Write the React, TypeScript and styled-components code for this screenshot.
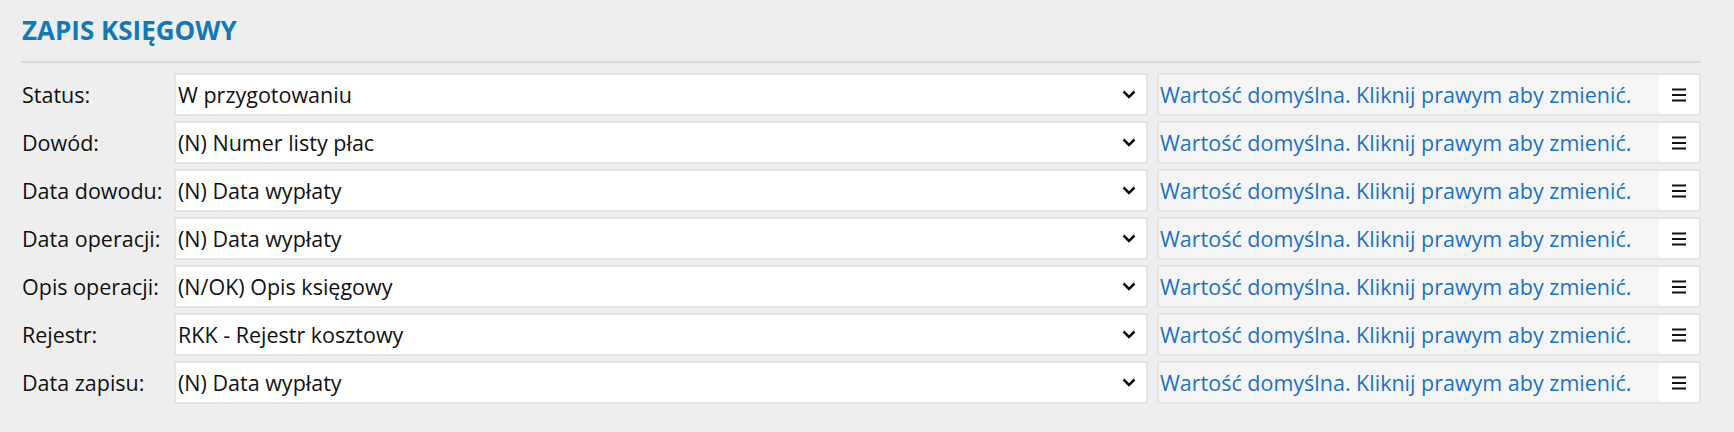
import React from "react";
import styled, { createGlobalStyle } from "styled-components";

const Global = createGlobalStyle`
  html, body { margin: 0; padding: 0; background: #eeeeee; }
  body { font-family: "Segoe UI", "Open Sans", "Noto Sans", sans-serif; }
`;

const Panel = styled.div`
  padding: 13px 33px 0 21px;
  width: 1734px;
  height: 432px;
  box-sizing: border-box;
  background: #eeeeee;
`;

const Title = styled.h2`
  margin: 0;
  padding-left: 1px;
  font-size: 26px;
  font-weight: 700;
  color: #1478b4;
  line-height: 34px;
`;

const Separator = styled.div`
  height: 2px;
  background: #d9d9d9;
  margin-top: 14px;
  margin-bottom: 10px;
`;

const Rows = styled.div`
  display: flex;
  flex-direction: column;
  gap: 5px;
`;

const Row = styled.div`
  display: grid;
  grid-template-columns: 153px 974px 1fr;
  height: 43px;
  align-items: stretch;
`;

const Label = styled.div`
  display: flex;
  align-items: center;
  padding-left: 1px;
  font-size: 21.5px;
  color: #111;
  white-space: nowrap;
`;

const Select = styled.div`
  display: flex;
  align-items: center;
  justify-content: space-between;
  background: #ffffff;
  border: 2px solid #e4e4e4;
  padding: 0 10px 0 2px;
  font-size: 21.5px;
  color: #111;
  box-sizing: border-box;
  white-space: nowrap;
`;

const DefaultBox = styled.div`
  display: flex;
  margin-left: 9px;
  border: 2px solid #e4e4e4;
  background: #ffffff;
  box-sizing: border-box;
`;

const DefaultText = styled.div`
  flex: 1;
  display: flex;
  align-items: center;
  background: #f5f5f5;
  padding-left: 1px;
  font-size: 21.5px;
  color: #1b72c4;
  white-space: nowrap;
`;

const MenuButton = styled.div`
  width: 40px;
  display: flex;
  align-items: center;
  justify-content: center;
`;

const Chevron = () => (
  <svg width="14" height="9" viewBox="0 0 14 9">
    <polyline points="1.5,1.5 7,7 12.5,1.5" fill="none" stroke="#111" strokeWidth="2.6" />
  </svg>
);

const Burger = () => (
  <svg width="14" height="14" viewBox="0 0 14 14">
    <rect x="0" y="0.5" width="14" height="2" fill="#111" />
    <rect x="0" y="6" width="14" height="2" fill="#111" />
    <rect x="0" y="11.5" width="14" height="2" fill="#111" />
  </svg>
);

const rows: [string, string][] = [
  ["Status:", "W przygotowaniu"],
  ["Dowód:", "(N) Numer listy płac"],
  ["Data dowodu:", "(N) Data wypłaty"],
  ["Data operacji:", "(N) Data wypłaty"],
  ["Opis operacji:", "(N/OK) Opis księgowy"],
  ["Rejestr:", "RKK - Rejestr kosztowy"],
  ["Data zapisu:", "(N) Data wypłaty"],
];

export default function App() {
  return (
    <>
      <Global />
      <Panel>
        <Title>ZAPIS KSIĘGOWY</Title>
        <Separator />
        <Rows>
          {rows.map(([label, value]) => (
            <Row key={label}>
              <Label>{label}</Label>
              <Select>
                <span>{value}</span>
                <Chevron />
              </Select>
              <DefaultBox>
                <DefaultText>Wartość domyślna. Kliknij prawym aby zmienić.</DefaultText>
                <MenuButton>
                  <Burger />
                </MenuButton>
              </DefaultBox>
            </Row>
          ))}
        </Rows>
      </Panel>
    </>
  );
}
